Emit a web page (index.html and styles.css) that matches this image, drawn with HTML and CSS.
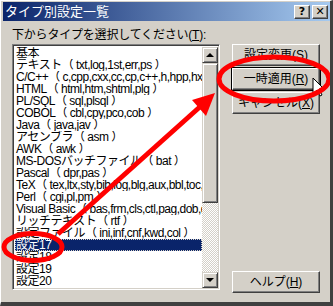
FILE: index.html
```html
<!DOCTYPE html>
<html lang="ja">
<head>
  <meta charset="UTF-8">
  <title>タイプ別設定一覧</title>
  <link rel="stylesheet" href="styles.css">
</head>
<body>
  <div class="window">
    <div class="titlebar">
      <span class="title">タイプ別設定一覧</span>
      <span class="tbtn">?</span>
      <span class="tbtn">✕</span>
    </div>
    <div class="content">
      <div class="label">下からタイプを選択してください(<u>T</u>):</div>
      <div class="main">
        <div class="listbox">
          <ul class="items">
            <li>基本</li>
            <li>テキスト（ txt,log,1st,err,ps ）</li>
            <li>C/C++（ c,cpp,cxx,cc,cp,c++,h,hpp,hxx ）</li>
            <li>HTML（ html,htm,shtml,plg ）</li>
            <li>PL/SQL（ sql,plsql ）</li>
            <li>COBOL（ cbl,cpy,pco,cob ）</li>
            <li>Java（ java,jav ）</li>
            <li>アセンブラ（ asm ）</li>
            <li>AWK（ awk ）</li>
            <li>MS-DOSバッチファイル（ bat ）</li>
            <li>Pascal（ dpr,pas ）</li>
            <li>TeX（ tex,ltx,sty,bib,log,blg,aux,bbl,toc,lof ）</li>
            <li>Perl（ cgi,pl,pm ）</li>
            <li>Visual Basic（ bas,frm,cls,ctl,pag,dob,dsr ）</li>
            <li>リッチテキスト（ rtf ）</li>
            <li>設定ファイル（ ini,inf,cnf,kwd,col ）</li>
            <li class="selected">設定17</li>
            <li>設定18</li>
            <li>設定19</li>
            <li>設定20</li>
          </ul>
          <div class="scrollbar">
            <div class="sbtn"><span class="arrow-up"></span></div>
            <div class="thumb"></div>
            <div class="track"></div>
            <div class="sbtn"><span class="arrow-down"></span></div>
          </div>
        </div>
        <div class="buttons">
          <div class="btn">設定変更(<u>S</u>)</div>
          <div class="btn default">一時適用(<u>R</u>)</div>
          <div class="btn">キャンセル(<u>X</u>)</div>
          <div class="btn help">ヘルプ(<u>H</u>)</div>
        </div>
      </div>
    </div>

    <svg class="marks" width="333" height="306" viewBox="0 0 333 306">
      <path d="M313 78 L313 94 L317 90 L320 96 L322 95 L319 89 L324 89 Z" fill="#fff" stroke="#000" stroke-width="1"/>
      <ellipse cx="274" cy="79" rx="55" ry="22" fill="none" stroke="#f00" stroke-width="5"/>
      <ellipse cx="33" cy="247" rx="29" ry="13.5" fill="none" stroke="#f00" stroke-width="5"/>
      <line x1="58" y1="234" x2="202" y2="105" stroke="#f00" stroke-width="5"/>
      <polygon points="215,93 206,116 192,100" fill="#f00"/>
    </svg>
  </div>
</body>
</html>
```

FILE: styles.css
```css
body {
  margin: 0;
  background: #d4d0c8;
}
.window {
  position: relative;
  width: 333px;
  height: 306px;
  box-sizing: border-box;
  background: #d4d0c8;
  border-style: solid;
  border-width: 1px 3px 4px 1px;
  border-color: #fff #404040 #404040 #fff;
  padding: 1px 0 0 2px;
  font-family: "Liberation Sans", "Noto Sans CJK JP", sans-serif;
  font-size: 12px;
  color: #000;
  overflow: hidden;
}
.titlebar {
  display: flex;
  align-items: center;
  height: 19px;
  background: linear-gradient(to right, #0a246a, #a6caf0);
  padding: 0 2px 0 2px;
  gap: 2px;
}
.title {
  flex: 1;
  color: #fff;
  font-size: 13px;
  line-height: 19px;
}
.tbtn {
  width: 16px;
  height: 14px;
  box-sizing: border-box;
  background: #d4d0c8;
  border-style: solid;
  border-width: 1px;
  border-color: #fff #404040 #404040 #fff;
  box-shadow: inset -1px -1px 0 #808080;
  font-family: "DejaVu Sans", sans-serif;
  font-weight: bold;
  font-size: 11px;
  line-height: 12px;
  text-align: center;
}
.content {
  padding: 7px 0 0 9px;
}
.label {
  height: 16px;
  line-height: 14px;
  letter-spacing: -0.2px;
}
.main {
  display: flex;
  gap: 12px;
}
.listbox {
  display: flex;
  width: 208px;
  height: 246px;
  box-sizing: border-box;
  background: #fff;
  border-style: solid;
  border-width: 1px;
  border-color: #808080 #fff #fff #808080;
  box-shadow: inset 1px 1px 0 #404040, inset -1px -1px 0 #d4d0c8;
  padding: 2px 1px 1px 2px;
}
.items {
  flex: 1;
  list-style: none;
  margin: 0;
  padding: 0;
  overflow: hidden;
}
.items li {
  height: 12px;
  line-height: 12px;
  white-space: nowrap;
  padding-left: 1px;
  letter-spacing: -0.5px;
  overflow: hidden;
}
.items li.selected {
  background: #0a246a;
  color: #fff;
  outline: 1px dotted #d4d0c8;
  outline-offset: -1px;
}
.scrollbar {
  display: flex;
  flex-direction: column;
  width: 16px;
}
.sbtn, .thumb {
  box-sizing: border-box;
  background: #d4d0c8;
  border-style: solid;
  border-width: 1px;
  border-color: #d4d0c8 #404040 #404040 #d4d0c8;
  box-shadow: inset 1px 1px 0 #fff, inset -1px -1px 0 #808080;
}
.sbtn {
  height: 16px;
  display: flex;
  align-items: center;
  justify-content: center;
}
.thumb {
  height: 140px;
}
.track {
  flex: 1;
  background: repeating-conic-gradient(#fff 0 25%, #d4d0c8 0 50%) 0 0 / 2px 2px;
}
.arrow-up, .arrow-down {
  width: 0;
  height: 0;
  border-left: 4px solid transparent;
  border-right: 4px solid transparent;
}
.arrow-up {
  border-bottom: 4px solid #000;
}
.arrow-down {
  border-top: 4px solid #000;
}
.buttons {
  display: flex;
  flex-direction: column;
  gap: 2px;
  width: 88px;
}
.btn {
  height: 22px;
  box-sizing: border-box;
  background: #d4d0c8;
  border-style: solid;
  border-width: 1px;
  border-color: #fff #404040 #404040 #fff;
  box-shadow: inset -1px -1px 0 #808080;
  text-align: center;
  line-height: 20px;
}
.btn.default {
  outline: 1px solid #000;
}
.btn.help {
  margin-top: auto;
  margin-bottom: -3px;
}
.marks {
  position: absolute;
  left: -1px;
  top: -1px;
  pointer-events: none;
}
```
